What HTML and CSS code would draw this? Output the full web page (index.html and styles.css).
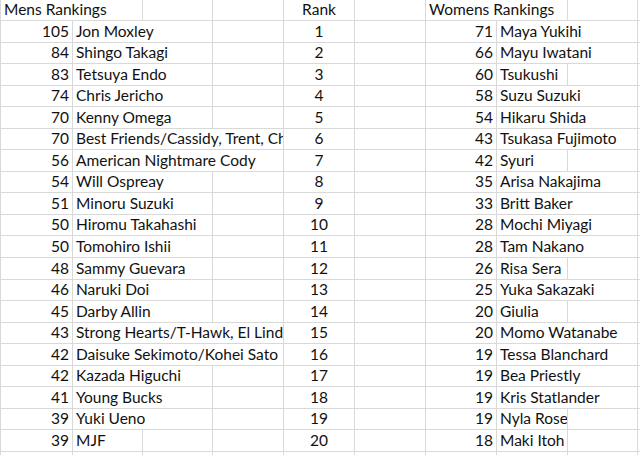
FILE: index.html
```html
<!DOCTYPE html>
<html>
<head>
<meta charset="utf-8">
<link rel="stylesheet" href="styles.css">
</head>
<body>
<div class="sheet">
  <div class="c first t s2">Mens Rankings</div><div class="c"></div><div class="c"></div><div class="c m">Rank</div><div class="c"></div><div class="c t s2">Womens Rankings</div><div class="c"></div><div class="c"></div>

  <div class="c first n">105</div><div class="c t s2">Jon Moxley</div><div class="c"></div><div class="c m">1</div><div class="c"></div><div class="c n">71</div><div class="c t s2">Maya Yukihi</div><div class="c"></div>
  <div class="c first n">84</div><div class="c t s2">Shingo Takagi</div><div class="c"></div><div class="c m">2</div><div class="c"></div><div class="c n">66</div><div class="c t s2">Mayu Iwatani</div><div class="c"></div>
  <div class="c first n">83</div><div class="c t s2">Tetsuya Endo</div><div class="c"></div><div class="c m">3</div><div class="c"></div><div class="c n">60</div><div class="c t">Tsukushi</div><div class="c"></div><div class="c"></div>
  <div class="c first n">74</div><div class="c t s2">Chris Jericho</div><div class="c"></div><div class="c m">4</div><div class="c"></div><div class="c n">58</div><div class="c t s2">Suzu Suzuki</div><div class="c"></div>
  <div class="c first n">70</div><div class="c t s2">Kenny Omega</div><div class="c"></div><div class="c m">5</div><div class="c"></div><div class="c n">54</div><div class="c t s2">Hikaru Shida</div><div class="c"></div>
  <div class="c first n">70</div><div class="c t s3">Best Friends/Cassidy, Trent, Chuck Taylor</div><div class="c m">6</div><div class="c"></div><div class="c n">43</div><div class="c t s2">Tsukasa Fujimoto</div><div class="c"></div>
  <div class="c first n">56</div><div class="c t s3">American Nightmare Cody</div><div class="c m">7</div><div class="c"></div><div class="c n">42</div><div class="c t">Syuri</div><div class="c"></div><div class="c"></div>
  <div class="c first n">54</div><div class="c t s2">Will Ospreay</div><div class="c"></div><div class="c m">8</div><div class="c"></div><div class="c n">35</div><div class="c t s2">Arisa Nakajima</div><div class="c"></div>
  <div class="c first n">51</div><div class="c t s2">Minoru Suzuki</div><div class="c"></div><div class="c m">9</div><div class="c"></div><div class="c n">33</div><div class="c t s2">Britt Baker</div><div class="c"></div>
  <div class="c first n">50</div><div class="c t s2">Hiromu Takahashi</div><div class="c"></div><div class="c m">10</div><div class="c"></div><div class="c n">28</div><div class="c t s2">Mochi Miyagi</div><div class="c"></div>
  <div class="c first n">50</div><div class="c t s2">Tomohiro Ishii</div><div class="c"></div><div class="c m">11</div><div class="c"></div><div class="c n">28</div><div class="c t s2">Tam Nakano</div><div class="c"></div>
  <div class="c first n">48</div><div class="c t s2">Sammy Guevara</div><div class="c"></div><div class="c m">12</div><div class="c"></div><div class="c n">26</div><div class="c t">Risa Sera</div><div class="c"></div><div class="c"></div>
  <div class="c first n">46</div><div class="c t s2">Naruki Doi</div><div class="c"></div><div class="c m">13</div><div class="c"></div><div class="c n">25</div><div class="c t s2">Yuka Sakazaki</div><div class="c"></div>
  <div class="c first n">45</div><div class="c t s2">Darby Allin</div><div class="c"></div><div class="c m">14</div><div class="c"></div><div class="c n">20</div><div class="c t">Giulia</div><div class="c"></div><div class="c"></div>
  <div class="c first n">43</div><div class="c t s3">Strong Hearts/T-Hawk, El Lindaman</div><div class="c m">15</div><div class="c"></div><div class="c n">20</div><div class="c t s2">Momo Watanabe</div><div class="c"></div>
  <div class="c first n">42</div><div class="c t s3">Daisuke Sekimoto/Kohei Sato</div><div class="c m">16</div><div class="c"></div><div class="c n">19</div><div class="c t s2">Tessa Blanchard</div><div class="c"></div>
  <div class="c first n">42</div><div class="c t s2">Kazada Higuchi</div><div class="c"></div><div class="c m">17</div><div class="c"></div><div class="c n">19</div><div class="c t s2">Bea Priestly</div><div class="c"></div>
  <div class="c first n">41</div><div class="c t s2">Young Bucks</div><div class="c"></div><div class="c m">18</div><div class="c"></div><div class="c n">19</div><div class="c t s2">Kris Statlander</div><div class="c"></div>
  <div class="c first n">39</div><div class="c t s2">Yuki Ueno</div><div class="c"></div><div class="c m">19</div><div class="c"></div><div class="c n">19</div><div class="c t">Nyla Rose</div><div class="c"></div><div class="c"></div>
  <div class="c first n">39</div><div class="c t">MJF</div><div class="c"></div><div class="c"></div><div class="c m">20</div><div class="c"></div><div class="c n">18</div><div class="c t">Maki Itoh</div><div class="c"></div><div class="c"></div>

  <div class="c first"></div><div class="c"></div><div class="c"></div><div class="c"></div><div class="c"></div><div class="c"></div><div class="c"></div><div class="c"></div><div class="c"></div><div class="c"></div>
</div>
</body>
</html>
```
FILE: styles.css
```css
html, body {
  margin: 0;
  padding: 0;
  background: #ffffff;
}
body {
  width: 640px;
  height: 455px;
  overflow: hidden;
}
.sheet {
  display: grid;
  grid-template-columns: 73px 70px 70px 71px 71px 71px 71px 71px 70px 1fr;
  grid-template-rows: 21px;
  grid-auto-rows: 21.55px;
  font-family: "Lato", "Liberation Sans", sans-serif;
  font-size: 15.5px;
  color: #111111;
}
.c {
  box-sizing: border-box;
  border-right: 1px solid #d9d9d9;
  border-bottom: 1px solid #d9d9d9;
  display: flex;
  align-items: flex-end;
  padding: 0 3px 3px;
  line-height: 15px;
  white-space: nowrap;
  overflow: hidden;
  min-width: 0;
}
.first {
  border-left: 1px solid #d9d9d9;
}
.n {
  justify-content: flex-end;
}
.t {
  justify-content: flex-start;
}
.m {
  justify-content: center;
}
.s2 {
  grid-column: span 2;
}
.s3 {
  grid-column: span 3;
}
```
